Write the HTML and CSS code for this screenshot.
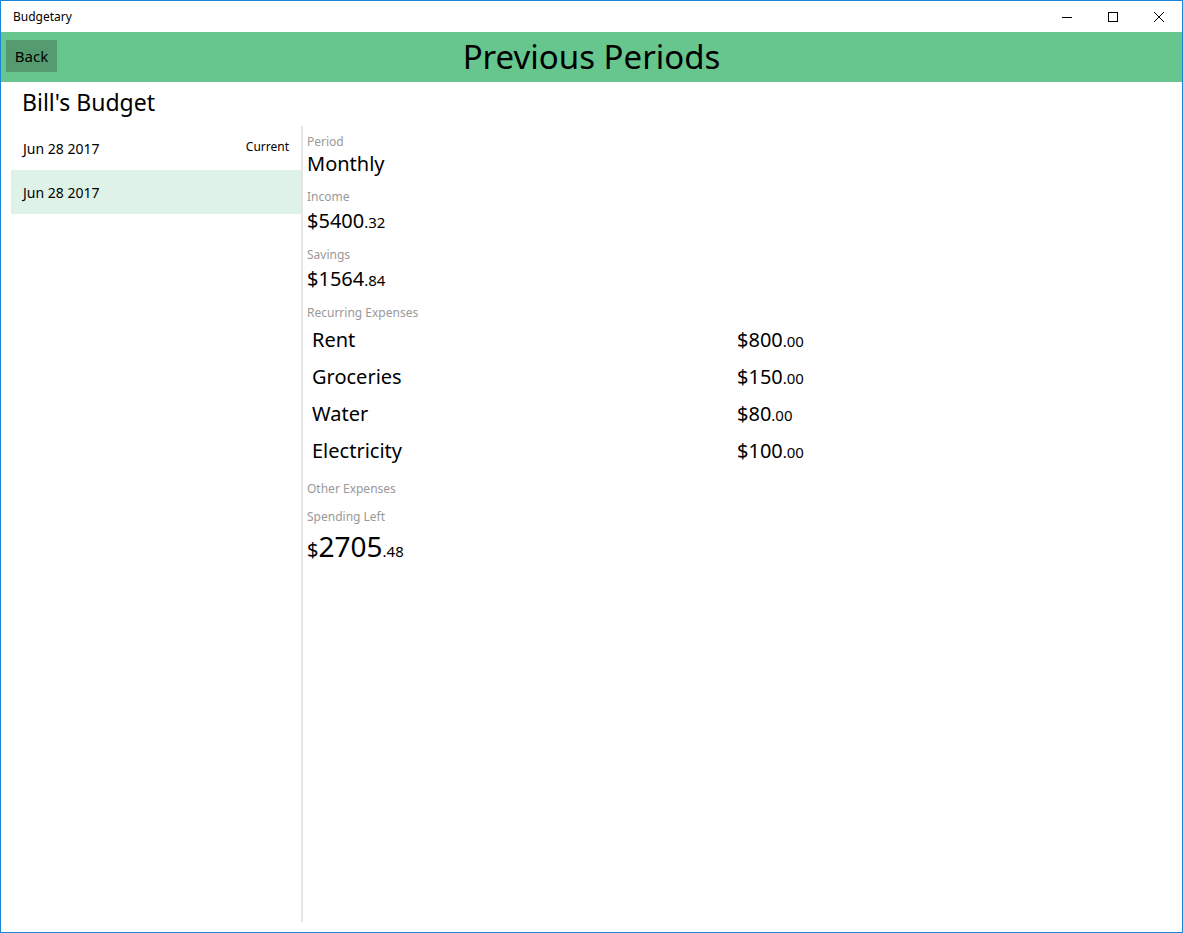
FILE: index.html
```html
<!DOCTYPE html>
<html lang="en">
<head>
    <meta charset="UTF-8">
    <title>Budgetary</title>
    <link rel="stylesheet" href="styles.css">
</head>
<body>
<div class="window">
    <!-- Title bar -->
    <div class="titlebar">
        <span class="app-name">Budgetary</span>
        <div class="controls">
            <span class="ctl"><svg width="10" height="10" viewBox="0 0 10 10"><path d="M0 5.5h10" stroke="#000" stroke-width="1"/></svg></span>
            <span class="ctl"><svg width="10" height="10" viewBox="0 0 10 10"><rect x="0.5" y="0.5" width="9" height="9" fill="none" stroke="#000" stroke-width="1"/></svg></span>
            <span class="ctl"><svg width="10" height="10" viewBox="0 0 10 10"><path d="M0 0L10 10M10 0L0 10" stroke="#000" stroke-width="1"/></svg></span>
        </div>
    </div>

    <!-- Header -->
    <div class="header">
        <button class="back">Back</button>
        <h1>Previous Periods</h1>
    </div>

    <h2 class="budget-name">Bill's Budget</h2>

    <div class="main">
        <div class="periods">
            <div class="period-item">
                <span>Jun 28 2017</span>
                <span class="tag">Current</span>
            </div>
            <div class="period-item selected">
                <span>Jun 28 2017</span>
            </div>
        </div>

        <div class="details">
            <div class="label">Period</div>
            <div class="value">Monthly</div>

            <div class="label">Income</div>
            <div class="value money">$5400<span class="cents">.32</span></div>

            <div class="label">Savings</div>
            <div class="value money">$1564<span class="cents">.84</span></div>

            <div class="label">Recurring Expenses</div>
            <div class="expenses">
                <div class="exp-name">Rent</div>
                <div class="exp-amount">$800<span class="cents">.00</span></div>
                <div class="exp-name">Groceries</div>
                <div class="exp-amount">$150<span class="cents">.00</span></div>
                <div class="exp-name">Water</div>
                <div class="exp-amount">$80<span class="cents">.00</span></div>
                <div class="exp-name">Electricity</div>
                <div class="exp-amount">$100<span class="cents">.00</span></div>
            </div>

            <div class="label other">Other Expenses</div>

            <div class="label">Spending Left</div>
            <div class="value big">$<span class="whole">2705</span><span class="cents">.48</span></div>
        </div>
    </div>
</div>
</body>
</html>
```

FILE: styles.css
```css
body {
    margin: 0;
    padding: 0;
    font-family: "Segoe UI", "Noto Sans", "Open Sans", sans-serif;
    color: #000;
    background: #fff;
}

.window {
    width: 1183px;
    height: 933px;
    box-sizing: border-box;
    border: 1px solid #1a84d7;
    display: flex;
    flex-direction: column;
    overflow: hidden;
}

.titlebar {
    height: 31px;
    display: flex;
    align-items: center;
    justify-content: space-between;
    flex-shrink: 0;
}

.app-name {
    font-size: 12px;
    padding-left: 12px;
}

.controls {
    display: flex;
    height: 31px;
}

.ctl {
    width: 46px;
    display: flex;
    align-items: center;
    justify-content: center;
}

.header {
    height: 50px;
    background-color: #66c68d;
    position: relative;
    display: flex;
    align-items: center;
    justify-content: center;
    flex-shrink: 0;
}

.back {
    position: absolute;
    left: 5px;
    top: 8px;
    width: 51px;
    height: 32px;
    border: none;
    background-color: #549c6f;
    font-family: inherit;
    font-size: 15px;
    color: #000;
    padding: 0;
}

.header h1 {
    margin: 0;
    font-size: 33px;
    font-weight: normal;
    line-height: 50px;
}

.budget-name {
    margin: 0;
    height: 44px;
    padding-left: 21px;
    font-size: 23px;
    font-weight: normal;
    line-height: 40px;
    flex-shrink: 0;
}

.main {
    flex: 1;
    display: flex;
    padding-left: 10px;
    padding-bottom: 10px;
}

.periods {
    width: 290px;
    border-right: 2px solid #e6e6e6;
}

.period-item {
    height: 44px;
    display: flex;
    align-items: center;
    justify-content: space-between;
    padding: 0 12px;
    font-size: 14px;
}

.period-item.selected {
    background-color: #dff2e7;
}

.period-item .tag {
    font-size: 12px;
    margin-top: -3px;
}

.details {
    flex: 1;
    padding: 8px 4px;
}

.label {
    font-size: 12px;
    color: #999;
    line-height: 16px;
}

.value {
    font-size: 20px;
    line-height: 28px;
    margin-bottom: 11px;
}

.value.money {
    margin-top: 2px;
}

.cents {
    font-size: 15px;
}

.value.big {
    line-height: 38px;
    margin-top: 2px;
}

.value.big .whole {
    font-size: 28px;
}

.expenses {
    display: grid;
    grid-template-columns: 425px auto;
    grid-auto-rows: 37px;
    padding-left: 5px;
    margin-bottom: 3px;
    font-size: 20px;
    align-items: center;
}

.label.other {
    margin-top: 12px;
    margin-bottom: 12px;
}
```
